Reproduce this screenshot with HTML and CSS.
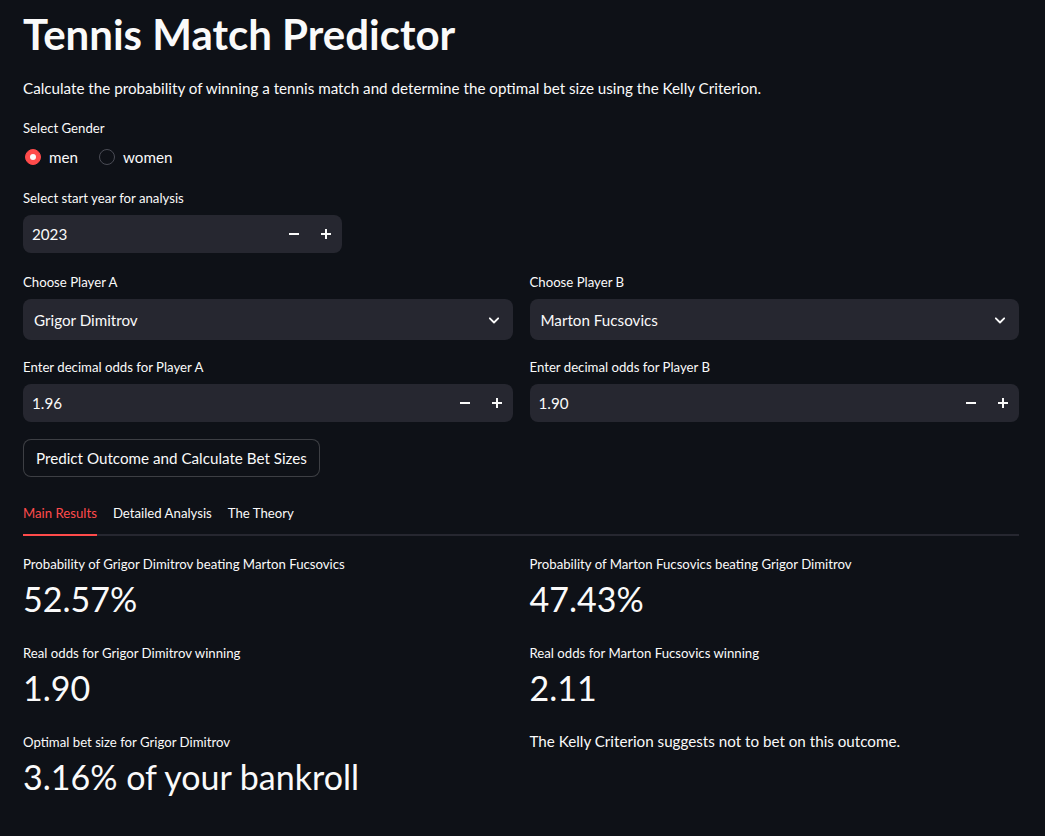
FILE: index.html
```html
<!DOCTYPE html>
<html lang="en">
<head>
<meta charset="utf-8">
<title>Tennis Match Predictor</title>
<link rel="stylesheet" href="styles.css">
</head>
<body>
<main class="page">
  <h1 class="title">Tennis Match Predictor</h1>
  <p class="intro">Calculate the probability of winning a tennis match and determine the optimal bet size using the Kelly Criterion.</p>

  <div class="field">
    <div class="label">Select Gender</div>
    <div class="radios">
      <span class="radio"><span class="dot on"></span>men</span>
      <span class="radio"><span class="dot"></span>women</span>
    </div>
  </div>

  <div class="field">
    <div class="label">Select start year for analysis</div>
    <div class="num num-small">
      <span class="num-val">2023</span>
      <span class="step"><svg viewBox="0 0 12 12" width="12" height="12"><path d="M1 6h10" stroke="#fafafa" stroke-width="2"/></svg></span>
      <span class="step"><svg viewBox="0 0 12 12" width="12" height="12"><path d="M1 6h10M6 1v10" stroke="#fafafa" stroke-width="2"/></svg></span>
    </div>
  </div>

  <div class="cols">
    <div class="col">
      <div class="field">
        <div class="label">Choose Player A</div>
        <div class="select">
          <span class="sel-val">Grigor Dimitrov</span>
          <svg class="chev" viewBox="0 0 24 24" width="20" height="20"><path d="M7 10l5 5 5-5" fill="none" stroke="#fafafa" stroke-width="2.2" stroke-linecap="round" stroke-linejoin="round"/></svg>
        </div>
      </div>
      <div class="field">
        <div class="label">Enter decimal odds for Player A</div>
        <div class="num">
          <span class="num-val">1.96</span>
          <span class="step"><svg viewBox="0 0 12 12" width="12" height="12"><path d="M1 6h10" stroke="#fafafa" stroke-width="2"/></svg></span>
          <span class="step"><svg viewBox="0 0 12 12" width="12" height="12"><path d="M1 6h10M6 1v10" stroke="#fafafa" stroke-width="2"/></svg></span>
        </div>
      </div>
    </div>
    <div class="col">
      <div class="field">
        <div class="label">Choose Player B</div>
        <div class="select">
          <span class="sel-val">Marton Fucsovics</span>
          <svg class="chev" viewBox="0 0 24 24" width="20" height="20"><path d="M7 10l5 5 5-5" fill="none" stroke="#fafafa" stroke-width="2.2" stroke-linecap="round" stroke-linejoin="round"/></svg>
        </div>
      </div>
      <div class="field">
        <div class="label">Enter decimal odds for Player B</div>
        <div class="num">
          <span class="num-val">1.90</span>
          <span class="step"><svg viewBox="0 0 12 12" width="12" height="12"><path d="M1 6h10" stroke="#fafafa" stroke-width="2"/></svg></span>
          <span class="step"><svg viewBox="0 0 12 12" width="12" height="12"><path d="M1 6h10M6 1v10" stroke="#fafafa" stroke-width="2"/></svg></span>
        </div>
      </div>
    </div>
  </div>

  <button class="btn">Predict Outcome and Calculate Bet Sizes</button>

  <div class="tabs">
    <span class="tab active">Main Results</span>
    <span class="tab">Detailed Analysis</span>
    <span class="tab">The Theory</span>
  </div>

  <div class="cols results">
    <div class="col">
      <div class="metric">
        <div class="m-label">Probability of Grigor Dimitrov beating Marton Fucsovics</div>
        <div class="m-value">52.57%</div>
      </div>
      <div class="metric">
        <div class="m-label">Real odds for Grigor Dimitrov winning</div>
        <div class="m-value">1.90</div>
      </div>
      <div class="metric">
        <div class="m-label">Optimal bet size for Grigor Dimitrov</div>
        <div class="m-value">3.16% of your bankroll</div>
      </div>
    </div>
    <div class="col">
      <div class="metric">
        <div class="m-label">Probability of Marton Fucsovics beating Grigor Dimitrov</div>
        <div class="m-value">47.43%</div>
      </div>
      <div class="metric">
        <div class="m-label">Real odds for Marton Fucsovics winning</div>
        <div class="m-value">2.11</div>
      </div>
      <p class="note">The Kelly Criterion suggests not to bet on this outcome.</p>
    </div>
  </div>
</main>
</body>
</html>
```

FILE: styles.css
```css
* { box-sizing: border-box; }
html, body { margin: 0; padding: 0; }
body {
  background: #0e1117;
  color: #fafafa;
  font-family: "Lato", "Noto Sans", sans-serif;
  font-size: 15.2px;
}
.page {
  padding: 7px 26px 40px 23px;
}
.title {
  margin: 0;
  font-size: 42px;
  font-weight: 700;
  line-height: 54px;
}
.intro {
  margin: 15px 0 0;
  font-size: 15.2px;
  line-height: 24px;
}
.field { margin-top: 18px; }
.label {
  font-size: 13.2px;
  line-height: 20px;
  margin-bottom: 7px;
}
.radios { display: flex; gap: 19px; align-items: center; height: 24px; margin-top: 1px; }
.radio { display: flex; align-items: center; gap: 8px; font-size: 15.2px; }
.dot {
  width: 16px; height: 16px; border-radius: 50%;
  border: 1px solid #4a4c55;
  margin-left: 2px;
  display: inline-flex; align-items: center; justify-content: center;
}
.dot.on { background: #ff4b4b; border-color: #ff4b4b; }
.dot.on::after { content: ""; width: 6px; height: 6px; border-radius: 50%; background: #fafafa; }
.year-field { margin-top: 19px; }
.field:nth-of-type(2) { margin-top: 19px; }
.num {
  display: flex; align-items: center;
  height: 38px; background: #262730; border-radius: 8px;
  padding-left: 9px;
}
.num-small { width: 319px; }
.num-val { flex: 1; font-size: 15.2px; }
.step { width: 32px; display: flex; align-items: center; justify-content: center; }
.step svg { display: block; }
.cols { display: flex; gap: 17px; }
.col { flex: 1; min-width: 0; }
.cols .field:first-child { margin-top: 19px; }
.cols .field + .field { margin-top: 17px; }
.select {
  display: flex; align-items: center; justify-content: space-between;
  height: 41px; background: #262730; border-radius: 8px;
  padding: 0 9px 0 11px;
}
.sel-val { font-size: 15.2px; }
.btn {
  margin-top: 17px;
  display: block;
  height: 38px;
  padding: 0 12px;
  background: #0e1117;
  color: #fafafa;
  border: 1px solid rgba(250,250,250,0.2);
  border-radius: 8px;
  font-family: inherit;
  font-size: 15.2px;
}
.tabs {
  margin-top: 26px;
  display: flex; gap: 16px;
  border-bottom: 2px solid #262730;
}
.tab { font-size: 13.2px; line-height: 20px; padding-bottom: 11px; margin-bottom: -2px; border-bottom: 2px solid transparent; }
.tab.active { color: #ff4b4b; border-bottom-color: #ff4b4b; }
.results { margin-top: 18px; }
.metric { margin-bottom: 19px; }
.m-label { font-size: 13.2px; line-height: 20px; }
.m-value { font-size: 34px; line-height: 50px; }
.note { margin: 0; font-size: 15.2px; line-height: 18px; }
```
